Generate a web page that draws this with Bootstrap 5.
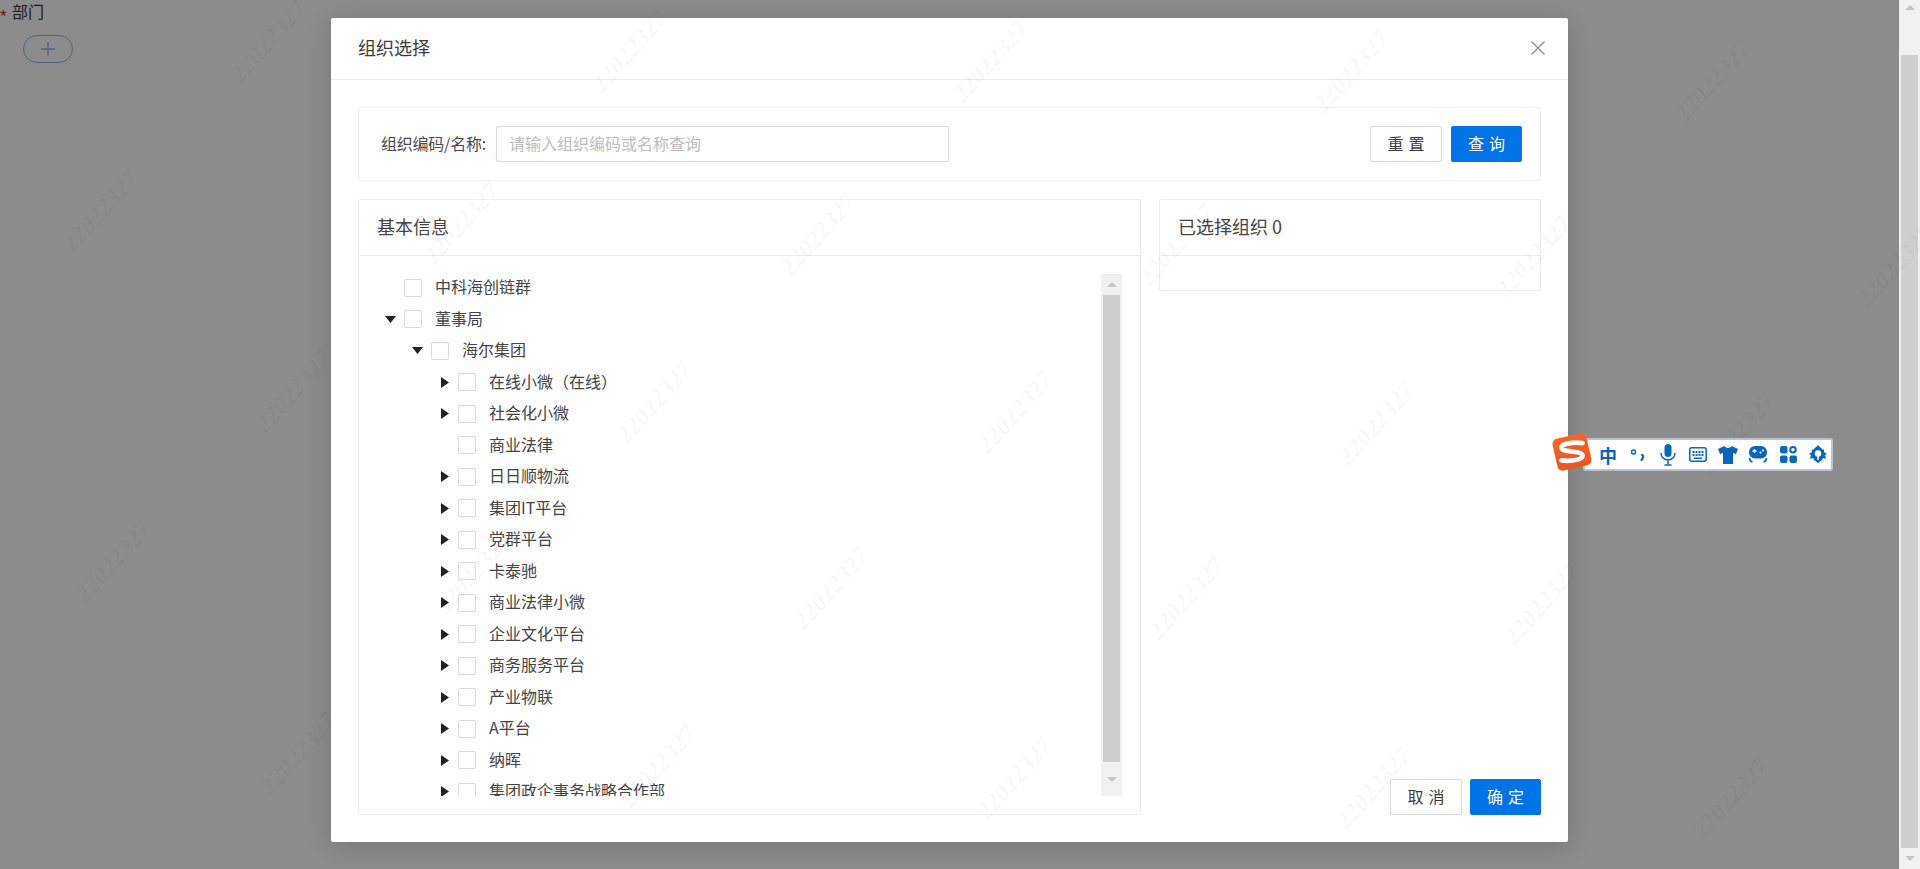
<!DOCTYPE html>
<html lang="zh-CN">
<head>
<meta charset="utf-8">
<title>组织选择</title>
<link rel="stylesheet" href="https://cdn.jsdelivr.net/npm/bootstrap@5.3.0/dist/css/bootstrap.min.css">
<style>
html,body{height:100%;overflow:hidden;margin:0}
body{font-family:"Noto Sans CJK SC","Liberation Sans",sans-serif;font-size:16px;color:#333;background:#fff}
.shell{height:869px;width:1920px}
.stage{width:1899px;position:relative;overflow:hidden}
.page-form{padding:1px 0 0 0;line-height:21px}
.req{color:#d82020;font-family:"Liberation Sans",sans-serif;font-size:17px;width:12px;display:inline-block;vertical-align:-4px}
.pill-add{width:50px;height:28px;margin:8px 0 0 23px;border:1px solid #8fb2f8;border-radius:14px;background:#fff;padding:0}
.modal-backdrop.shade{position:absolute;width:100%;height:100%;opacity:.45}
.modal.sheet{position:absolute;width:100%;height:100%;overflow:hidden}
.sheet .modal-dialog{width:1237px;max-width:1237px;margin:18px auto 0;transform:none}
.sheet .modal-content{height:824px;border:0;border-radius:2px;box-shadow:0 4px 26px rgba(0,0,0,.16);color:#3c3c3c}
.sheet .modal-header{height:62px;padding:0 23px 0 27px;border-bottom:1px solid #ececec;border-radius:0}
.sheet .modal-title{font-size:18px;font-weight:400;line-height:1;padding-bottom:3px}
.x-btn{border:0;background:none;padding:0;width:14px;height:14px;display:flex;margin-bottom:2px}
.sheet .modal-body{padding:27px;display:flex;flex-direction:column;gap:18px;min-height:0}
.search-box{height:74px;border:1px solid #eee;border-radius:2px;padding:0 18px 0 0}
.search-label{width:137px;padding:0 10px 2px 0;text-align:right;white-space:nowrap;flex:none;font-size:16px;color:#4a4a4a;letter-spacing:-.2px}
.search-input.form-control{width:453px;height:36px;border:1px solid #d9d9d9;border-radius:2px;padding:0 12px 2px 12px;font-size:16px;color:#333}
.search-input::placeholder{color:#bdbdbd}
.act{height:36px;width:72px;border-radius:2px;font-size:16px;letter-spacing:5px;padding:0 0 2px 5px;line-height:32px}
.act-plain{background:#fff;border:1px solid #d9d9d9;color:#3c3c3c}
.act-main{background:#0073e6;border:1px solid #0073e6;color:#fff;width:71px}
.confirm{width:71px}
.search-gap{margin-left:9px}
.work{flex:1;min-height:0;gap:18px}
.panel-l{width:783px;flex:none;border:1px solid #eee;border-radius:2px}
.panel-r{width:382px;flex:none}
.panel-r .card{height:92px;flex:none;border:1px solid #eee;border-radius:2px}
.sheet .card-header{height:56px;flex:none;background:#fff;border-bottom:1px solid #ececec;padding:0 18px;font-size:18px;line-height:53px;border-radius:0;color:#444}
.tree-wrap{padding:16px 18px 18px 0;min-height:0;flex:1;display:flex}
.tree{flex:1;min-width:0;overflow:hidden;padding-left:23px}
.t-row{height:31.5px;display:flex;align-items:center;white-space:nowrap;font-size:16px;color:#444}
.t-row.d1{padding-left:27px}
.t-row.d2{padding-left:54px}
.t-text{padding-bottom:3px;margin-left:-1px}
.caret-slot{width:22px;flex:none;display:flex;justify-content:flex-start;padding-left:3px}
.t-row.d2 .caret-slot{padding-left:5px}
.t-row .form-check-input{width:18px;height:18px;margin:0 14px 0 0;flex:none;border:1px solid #d9d9d9;border-radius:2px;float:none}
.bar-v{background:#f1f1f1;display:flex;flex-direction:column;align-items:center;flex:none}
.tree-bar{width:21px;margin-top:2px}
.arrow-up,.arrow-dn{width:0;height:0;border-left:5px solid transparent;border-right:5px solid transparent}
.arrow-up{border-bottom:5px solid #c4c4c4}
.arrow-dn{border-top:5px solid #c4c4c4}
.tree-bar .cap-top{height:21px;display:flex;align-items:center}
.tree-bar .thumb{width:17px;height:467px;background:#cfcfcf}
.tree-bar .cap-bot{flex:1;display:flex;align-items:center}
.page-bar{width:21px;height:869px}
.page-bar .cap-top{height:55px;padding-top:5px}
.page-bar .thumb{width:17px;height:793px;background:#cfcfcf}
.page-bar .cap-bot{flex:1;display:flex;align-items:center}
.ime{position:absolute;left:1583px;top:438px;width:250px;height:33px;background:#fff;border:2px solid #b9c4d3;border-radius:3px;z-index:1100;display:flex;align-items:center;padding-left:8px;color:#0a66bb}
.ime-slot{width:30px;flex:none;display:flex;justify-content:center;align-items:center}
.ime-zh{font-size:18px;font-weight:700;line-height:1;color:#0a66bb}
.ime-logo{position:absolute;left:1552px;top:433px;width:40px;height:38px;z-index:1101}
.marks{position:absolute;left:0;top:0;width:1920px;height:869px;z-index:1200;pointer-events:none}
.marks text{font-family:"Liberation Serif",serif;font-style:italic;font-weight:700;font-size:25px;fill:#000;fill-opacity:.03;text-anchor:middle;dominant-baseline:middle}
</style>
</head>
<body>
<div class="shell d-flex">
  <div class="stage flex-shrink-0">
    <div class="page-form">
      <div><span class="req">*</span>部门</div>
      <button type="button" class="pill-add d-flex align-items-center justify-content-center" aria-label="添加">
        <svg width="14" height="14" viewBox="0 0 14 14" fill="none" stroke="#8fb2f8" stroke-width="1.3"><path d="M7 0v14M0 7h14"/></svg>
      </button>
    </div>
    <div class="modal-backdrop shade"></div>
    <div class="modal sheet d-block">
      <div class="modal-dialog">
        <div class="modal-content">
          <div class="modal-header">
            <h5 class="modal-title">组织选择</h5>
            <button type="button" class="x-btn ms-auto" aria-label="关闭">
              <svg width="14" height="14" viewBox="0 0 14 14" fill="none" stroke="#858585" stroke-width="1.1"><path d="M.5.5l13 13M13.5.5l-13 13"/></svg>
            </button>
          </div>
          <div class="modal-body">
            <div class="search-box d-flex align-items-center flex-shrink-0">
              <label class="search-label" for="q">组织编码/名称:</label>
              <input id="q" class="form-control search-input" placeholder="请输入组织编码或名称查询">
              <button type="button" class="btn act act-plain ms-auto">重置</button>
              <button type="button" class="btn act act-main search-gap">查询</button>
            </div>
            <div class="work d-flex">
              <div class="card panel-l">
                <div class="card-header">基本信息</div>
                <div class="tree-wrap">
                  <div class="tree">
                    <div class="t-row"><span class="caret-slot"></span><input class="form-check-input" type="checkbox"><span class="t-text">中科海创链群</span></div>
                    <div class="t-row"><span class="caret-slot"><svg width="11" height="7" viewBox="0 0 11 7"><path d="M0 0h11L5.500 7z" fill="#222"/></svg></span><input class="form-check-input" type="checkbox"><span class="t-text">董事局</span></div>
                    <div class="t-row d1"><span class="caret-slot"><svg width="11" height="7" viewBox="0 0 11 7"><path d="M0 0h11L5.500 7z" fill="#222"/></svg></span><input class="form-check-input" type="checkbox"><span class="t-text">海尔集团</span></div>
                    <div class="t-row d2"><span class="caret-slot"><svg width="8" height="11" viewBox="0 0 8 11"><path d="M0 0l8 5.500L0 11z" fill="#222"/></svg></span><input class="form-check-input" type="checkbox"><span class="t-text">在线小微（在线）</span></div>
                    <div class="t-row d2"><span class="caret-slot"><svg width="8" height="11" viewBox="0 0 8 11"><path d="M0 0l8 5.500L0 11z" fill="#222"/></svg></span><input class="form-check-input" type="checkbox"><span class="t-text">社会化小微</span></div>
                    <div class="t-row d2"><span class="caret-slot"></span><input class="form-check-input" type="checkbox"><span class="t-text">商业法律</span></div>
                    <div class="t-row d2"><span class="caret-slot"><svg width="8" height="11" viewBox="0 0 8 11"><path d="M0 0l8 5.500L0 11z" fill="#222"/></svg></span><input class="form-check-input" type="checkbox"><span class="t-text">日日顺物流</span></div>
                    <div class="t-row d2"><span class="caret-slot"><svg width="8" height="11" viewBox="0 0 8 11"><path d="M0 0l8 5.500L0 11z" fill="#222"/></svg></span><input class="form-check-input" type="checkbox"><span class="t-text">集团IT平台</span></div>
                    <div class="t-row d2"><span class="caret-slot"><svg width="8" height="11" viewBox="0 0 8 11"><path d="M0 0l8 5.500L0 11z" fill="#222"/></svg></span><input class="form-check-input" type="checkbox"><span class="t-text">党群平台</span></div>
                    <div class="t-row d2"><span class="caret-slot"><svg width="8" height="11" viewBox="0 0 8 11"><path d="M0 0l8 5.500L0 11z" fill="#222"/></svg></span><input class="form-check-input" type="checkbox"><span class="t-text">卡泰驰</span></div>
                    <div class="t-row d2"><span class="caret-slot"><svg width="8" height="11" viewBox="0 0 8 11"><path d="M0 0l8 5.500L0 11z" fill="#222"/></svg></span><input class="form-check-input" type="checkbox"><span class="t-text">商业法律小微</span></div>
                    <div class="t-row d2"><span class="caret-slot"><svg width="8" height="11" viewBox="0 0 8 11"><path d="M0 0l8 5.500L0 11z" fill="#222"/></svg></span><input class="form-check-input" type="checkbox"><span class="t-text">企业文化平台</span></div>
                    <div class="t-row d2"><span class="caret-slot"><svg width="8" height="11" viewBox="0 0 8 11"><path d="M0 0l8 5.500L0 11z" fill="#222"/></svg></span><input class="form-check-input" type="checkbox"><span class="t-text">商务服务平台</span></div>
                    <div class="t-row d2"><span class="caret-slot"><svg width="8" height="11" viewBox="0 0 8 11"><path d="M0 0l8 5.500L0 11z" fill="#222"/></svg></span><input class="form-check-input" type="checkbox"><span class="t-text">产业物联</span></div>
                    <div class="t-row d2"><span class="caret-slot"><svg width="8" height="11" viewBox="0 0 8 11"><path d="M0 0l8 5.500L0 11z" fill="#222"/></svg></span><input class="form-check-input" type="checkbox"><span class="t-text">A平台</span></div>
                    <div class="t-row d2"><span class="caret-slot"><svg width="8" height="11" viewBox="0 0 8 11"><path d="M0 0l8 5.500L0 11z" fill="#222"/></svg></span><input class="form-check-input" type="checkbox"><span class="t-text">纳晖</span></div>
                    <div class="t-row d2"><span class="caret-slot"><svg width="8" height="11" viewBox="0 0 8 11"><path d="M0 0l8 5.500L0 11z" fill="#222"/></svg></span><input class="form-check-input" type="checkbox"><span class="t-text">集团政企事务战略合作部</span></div>
                  </div>
                  <div class="bar-v tree-bar">
                    <div class="cap-top"><div class="arrow-up"></div></div>
                    <div class="thumb"></div>
                    <div class="cap-bot"><div class="arrow-dn"></div></div>
                  </div>
                </div>
              </div>
              <div class="panel-r d-flex flex-column">
                <div class="card">
                  <div class="card-header">已选择组织 0</div>
                </div>
                <div class="d-flex justify-content-end mt-auto">
                  <button type="button" class="btn act act-plain">取消</button>
                  <button type="button" class="btn act act-main confirm ms-2">确定</button>
                </div>
              </div>
            </div>
          </div>
        </div>
      </div>
    </div>
  </div>
  <div class="bar-v page-bar">
    <div class="cap-top"><div class="arrow-up"></div></div>
    <div class="thumb"></div>
    <div class="cap-bot"><div class="arrow-dn"></div></div>
  </div>
</div>

<div class="ime">
  <span class="ime-slot"><span class="ime-zh">中</span></span>
  <span class="ime-slot"><svg width="16" height="14" viewBox="0 0 16 14" fill="none" stroke="#0a66bb"><circle cx="3.500" cy="4" r="2" stroke-width="1.500"/><path d="M12 7c1.500 0 1.500 2.500-.5 5" stroke-width="2.200" stroke-linecap="round"/></svg></span>
  <span class="ime-slot"><svg width="16" height="22" viewBox="0 0 16 22" fill="none"><rect x="4.500" y="0" width="7" height="13" rx="3.500" fill="#0a66bb"/><path d="M1 9c0 9 14 9 14 0M8 16v4M4.500 21h7" stroke="#0a66bb" stroke-width="1.500"/></svg></span>
  <span class="ime-slot"><svg width="18" height="15" viewBox="0 0 18 15"><rect x=".8" y=".8" width="16.400" height="13.400" rx="2" fill="none" stroke="#0a66bb" stroke-width="1.500"/><path d="M3.500 4h2v2h-2zM6.500 4h2v2h-2zM9.500 4h2v2h-2zM12.500 4h2v2h-2zM3.500 7h2v2h-2zM6.500 7h2v2h-2zM9.500 7h2v2h-2zM12.500 7h2v2h-2zM5 10.500h8v1.500H5z" fill="#0a66bb"/></svg></span>
  <span class="ime-slot"><svg width="20" height="18" viewBox="0 0 20 18"><path d="M6.500 0C7.500 2.500 12.500 2.500 13.500 0L20 3l-2 5-3-1v11H5V7L2 8 0 3z" fill="#0a66bb"/></svg></span>
  <span class="ime-slot"><svg width="20" height="17" viewBox="0 0 20 17"><rect x="1" y="0" width="18" height="12.500" rx="6" fill="#0a66bb"/><path d="M4.500 5h4M6.500 3.200v3.600" stroke="#fff" stroke-width="1.300"/><circle cx="12.500" cy="6.500" r="1" fill="#fff"/><circle cx="15" cy="4.500" r="1" fill="#fff"/><path d="M1.500 12c0 2.500 1 3.500 3 4M18.500 12c0 2.500-1 3.500-3 4" fill="none" stroke="#0a66bb" stroke-width="1.600"/></svg></span>
  <span class="ime-slot"><svg width="17" height="17" viewBox="0 0 17 17" fill="#0a66bb"><rect x="0" y="0" width="7.500" height="7.500" rx="2"/><circle cx="13" cy="3.800" r="2.800" fill="none" stroke="#0a66bb" stroke-width="2"/><rect x="0" y="9.500" width="7.500" height="7.500" rx="2"/><rect x="9.500" y="9.500" width="7.500" height="7.500" rx="2"/></svg></span>
  <span class="ime-slot"><svg width="18" height="19" viewBox="0 0 18 19"><path d="M9 0l3 3 2 2 1-1v3l3 2-2 1 1 4-3-1-1 2-4 3-4-3-1-2-3 1 1-4-2-1 3-2V4l1 1 2-2z" fill="#0a66bb"/><circle cx="9" cy="8.500" r="3.200" fill="#fff"/><path d="M9 9v6" stroke="#fff" stroke-width="1.500"/></svg></span>
</div>
<svg class="ime-logo" viewBox="0 0 38 36" role="img" aria-label="搜狗输入法">
  <defs><linearGradient id="lg" x1="0" y1="0" x2="0" y2="1"><stop offset="0" stop-color="#f2682a"/><stop offset="1" stop-color="#e8571f"/></linearGradient></defs>
  <rect x="2.500" y="2.500" width="33" height="31" rx="5" fill="url(#lg)" transform="rotate(-13 19 18)"/>
  <path d="M29 9.500C20 8.500 9 10 9 14c0 4.500 20 2.500 20 7.500 0 4-11 5.500-20 4.500" fill="none" stroke="#fff" stroke-width="4.500" stroke-linecap="round"/>
</svg>

<svg class="marks" aria-hidden="true">
  <text x="270" y="43" transform="rotate(-48 270 43)">22022327</text>
  <text x="631" y="53" transform="rotate(-48 631 53)">22022327</text>
  <text x="992" y="63" transform="rotate(-48 992 63)">22022327</text>
  <text x="1353" y="73" transform="rotate(-48 1353 73)">22022327</text>
  <text x="1714" y="83" transform="rotate(-48 1714 83)">22022327</text>
  <text x="102" y="213" transform="rotate(-48 102 213)">22022327</text>
  <text x="463" y="225" transform="rotate(-48 463 225)">22022327</text>
  <text x="820" y="236" transform="rotate(-48 820 236)">22022327</text>
  <text x="1178" y="247" transform="rotate(-48 1178 247)">22022327</text>
  <text x="1535" y="258" transform="rotate(-48 1535 258)">22022327</text>
  <text x="1896" y="268" transform="rotate(-48 1896 268)">22022327</text>
  <text x="295" y="393" transform="rotate(-48 295 393)">22022327</text>
  <text x="656" y="404" transform="rotate(-48 656 404)">22022327</text>
  <text x="1017" y="414" transform="rotate(-48 1017 414)">22022327</text>
  <text x="1378" y="425" transform="rotate(-48 1378 425)">22022327</text>
  <text x="1739" y="435" transform="rotate(-48 1739 435)">22022327</text>
  <text x="115" y="563" transform="rotate(-48 115 563)">22022327</text>
  <text x="475" y="575" transform="rotate(-48 475 575)">22022327</text>
  <text x="833" y="590" transform="rotate(-48 833 590)">22022327</text>
  <text x="1188" y="600" transform="rotate(-48 1188 600)">22022327</text>
  <text x="1543" y="606" transform="rotate(-48 1543 606)">22022327</text>
  <text x="300" y="755" transform="rotate(-48 300 755)">22022327</text>
  <text x="660" y="768" transform="rotate(-48 660 768)">22022327</text>
  <text x="1016" y="780" transform="rotate(-48 1016 780)">22022327</text>
  <text x="1375" y="790" transform="rotate(-48 1375 790)">22022327</text>
  <text x="1732" y="800" transform="rotate(-48 1732 800)">22022327</text>
</svg>
<script src="https://cdn.jsdelivr.net/npm/bootstrap@5.3.0/dist/js/bootstrap.bundle.min.js"></script>
</body>
</html>
